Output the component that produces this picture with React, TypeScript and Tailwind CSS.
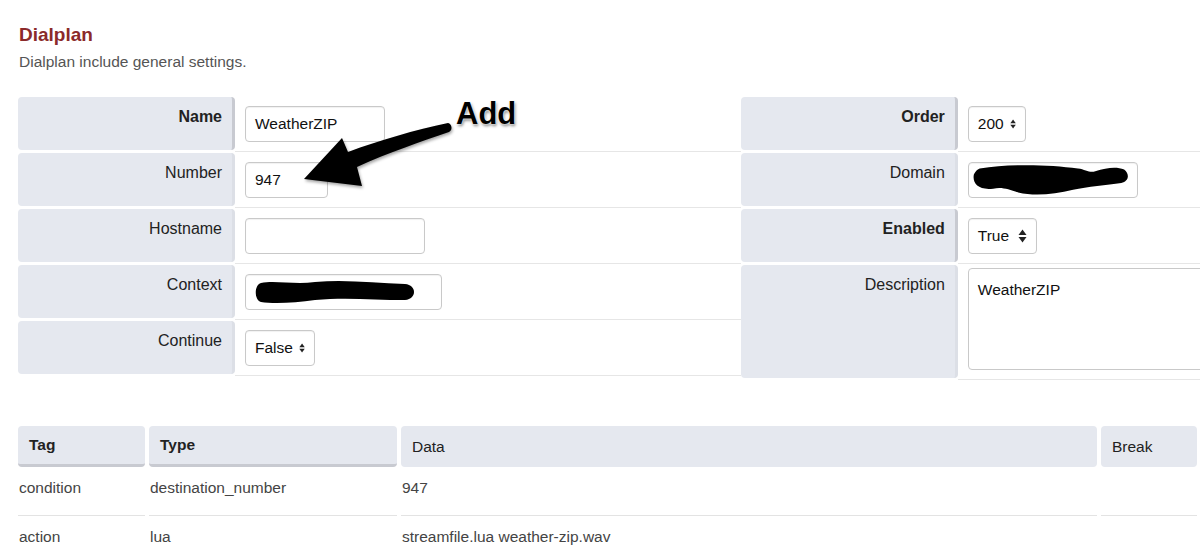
import React from 'react';

const font = { fontFamily: '"Liberation Sans", Arial, sans-serif' };

const SelectArrows = () => (
  <svg width="9" height="14" viewBox="0 0 9 14" className="ml-[6px]">
    <path d="M4.5 0.5 L8.5 6 L0.5 6 Z" fill="#222" />
    <path d="M4.5 13.5 L8.5 8 L0.5 8 Z" fill="#222" />
  </svg>
);

const inputCls =
  'h-[36px] border border-[#c9c9c9] rounded-[4px] bg-white shadow-[inset_0_1px_1px_rgba(0,0,0,0.06)] flex items-center px-[9px] text-[15.5px] text-[#111]';

const FakeSelect = ({ value, width }: { value: string; width: string }) => (
  <div className={`${inputCls} ${width} justify-between`}>
    <span>{value}</span>
    <SelectArrows />
  </div>
);

const Scribble = ({ d, w, h }: { d: string; w: number; h: number }) => (
  <svg width={w} height={h} viewBox={`0 0 ${w} ${h}`}>
    <path d={d} fill="#000" />
  </svg>
);

type Row = {
  label: string;
  required?: boolean;
  height?: string;
  field: React.ReactNode;
};

const FormTable = ({ rows, className }: { rows: Row[]; className: string }) => (
  <div className={className}>
    {rows.map((r) => (
      <div key={r.label} className="flex">
        <div
          className={`w-[217px] shrink-0 bg-[#e5e8ef] rounded-[4px] mb-[3px] text-right pr-[10px] pt-[8px] text-[16px] text-[#222] ${
            r.height ?? 'h-[53px]'
          } ${r.required ? 'font-bold border-r-[3px] border-[#c8cad1]' : 'border-r-[3px] border-[#dcdfe6]'}`}
        >
          {r.label}
        </div>
        <div className="flex-1 border-b border-[#e6e6e6] pl-[10px] pt-[9px] mb-[1px]">{r.field}</div>
      </div>
    ))}
  </div>
);

export default function App() {
  const left: Row[] = [
    { label: 'Name', required: true, field: <div className={`${inputCls} w-[140px]`}>WeatherZIP</div> },
    { label: 'Number', field: <div className={`${inputCls} w-[83px]`}>947</div> },
    { label: 'Hostname', field: <div className={`${inputCls} w-[180px]`}></div> },
    {
      label: 'Context',
      field: (
        <div className={`${inputCls} w-[197px] pl-[9px]`}>
          <Scribble
            w={160}
            h={24}
            d="M6 3 C20 0 40 5 60 2 C90 -1 120 3 150 4 C162 5 162 19 150 20 C120 20 90 17 60 20 C40 23 18 24 6 22 C-1 20 -1 5 6 3 Z"
          />
        </div>
      ),
    },
    { label: 'Continue', field: <FakeSelect value="False" width="w-[70px]" /> },
  ];

  const right: Row[] = [
    { label: 'Order', required: true, field: <FakeSelect value="200" width="w-[58px]" /> },
    {
      label: 'Domain',
      field: (
        <div className={`${inputCls} w-[170px] pl-[3px]`}>
          <Scribble
            w={162}
            h={32}
            d="M8 4 C40 -1 80 0 110 4 C118 5 122 9 128 7 C140 3 150 2 158 5 C164 10 163 17 155 19 C140 21 120 23 105 26 C85 31 65 33 48 29 C38 26 32 23 22 25 C6 27 0 19 2 10 C4 6 6 5 8 4 Z"
          />
        </div>
      ),
    },
    { label: 'Enabled', required: true, field: <FakeSelect value="True" width="w-[69px]" /> },
    {
      label: 'Description',
      height: 'h-[113px]',
      field: (
        <div className="w-[260px] h-[102px] -mt-[6px] border border-[#c9c9c9] rounded-[4px] bg-white px-[9px] pt-[9px] text-[15.5px] text-[#111]">
          WeatherZIP
        </div>
      ),
    },
  ];

  const headers = [
    { t: 'Tag', w: 'w-[127px]', bold: true },
    { t: 'Type', w: 'w-[248px]', bold: true },
    { t: 'Data', w: 'w-[696px]', bold: false },
    { t: 'Break', w: 'w-[96px]', bold: false },
  ];

  const data = [
    ['condition', 'destination_number', '947', ''],
    ['action', 'lua', 'streamfile.lua weather-zip.wav', ''],
  ];

  return (
    <div className="relative w-[1200px] h-[554px] overflow-hidden bg-white" style={font}>
      <div className="pl-[19px] pt-[23px]">
        <h1 className="text-[19px] font-bold text-[#8b2a2a] leading-[24px]">Dialplan</h1>
        <p className="text-[15.5px] text-[#555] mt-[6px] leading-[18px]">Dialplan include general settings.</p>
      </div>

      <div className="flex mt-[26px] pl-[18px] w-[1240px]">
        <FormTable rows={left} className="w-[724px]" />
        <FormTable rows={right} className="w-[500px]" />
      </div>

      <div className="mt-[45px] pl-[18px]">
        <div className="flex gap-[4px]">
          {headers.map((h) => (
            <div
              key={h.t}
              className={`${h.w} h-[41px] bg-[#e5e8ef] rounded-[4px] flex items-center pl-[11px] text-[15.5px] text-[#222] ${
                h.bold ? 'font-bold border-b-[3px] border-[#c8cad1]' : ''
              }`}
            >
              {h.t}
            </div>
          ))}
        </div>
        {data.map((row, i) => (
          <div key={i} className="flex gap-[4px]">
            {row.map((c, j) => (
              <div
                key={j}
                className={`${headers[j].w} h-[48px] pt-[11px] leading-[18px] pl-[1px] text-[15.5px] text-[#444] ${
                  i === 0 ? 'border-b border-[#e3e3e3] mt-[1px]' : 'pt-[12px]'
                }`}
              >
                {c}
              </div>
            ))}
          </div>
        ))}
      </div>

      {/* annotation */}
      <svg className="absolute left-0 top-0 pointer-events-none" width="1200" height="554">
        <defs>
          <filter id="sh" x="-20%" y="-20%" width="140%" height="140%">
            <feDropShadow dx="1" dy="2" stdDeviation="1.5" floodColor="#000" floodOpacity="0.35" />
          </filter>
        </defs>
        <path
          filter="url(#sh)"
          d="M448 123 C452 124 453 130 449 132 C420 142 390 152 357 167 L362 186 L304 179 L342 138 L348 152 C380 140 415 130 448 123 Z"
          fill="#000"
        />
      </svg>
      <div
        className="absolute left-[456px] top-[98px] text-[31px] font-bold text-black leading-none"
        style={{ textShadow: '0 0 2px #fff, 0 0 2px #fff, 1px 2px 3px rgba(0,0,0,0.5)' }}
      >
        Add
      </div>
    </div>
  );
}
